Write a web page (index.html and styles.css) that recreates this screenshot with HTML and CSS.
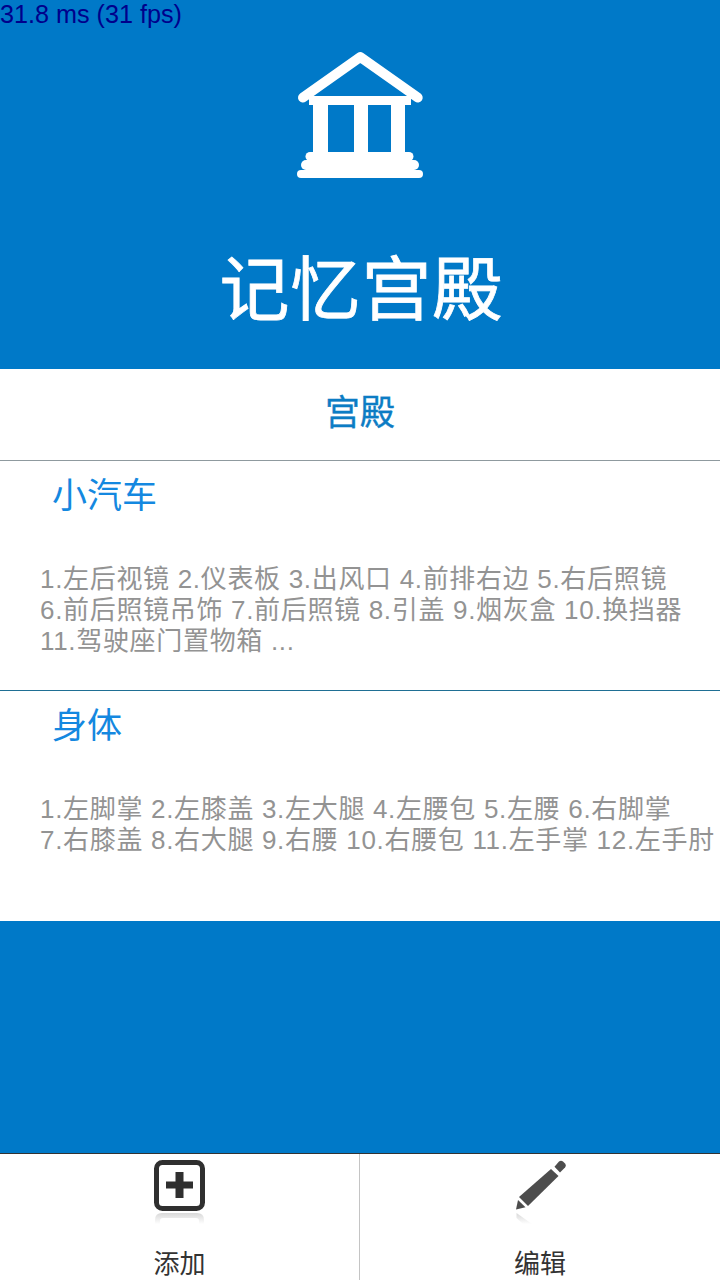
FILE: index.html
```html
<!DOCTYPE html>
<html lang="zh">
<head>
<meta charset="utf-8">
<title>记忆宫殿</title>
<link rel="stylesheet" href="styles.css">
</head>
<body>
<div class="fps">31.8 ms (31 fps)</div>
<header class="hero">
  <svg class="logo" viewBox="0 0 126 128" aria-hidden="true">
    <path class="roof" d="M6 46.500 L63.300 6 L120.700 46.500"/>
    <path class="fill" d="M12 45H114V54H12Z"/>
    <path class="fill" d="M16 50H31V104H16ZM57 50H71V104H57ZM94 50H108V104H94Z"/>
    <path class="fill" d="M13 101H112A4.500 4.500 0 0 1 112 110H13A4.500 4.500 0 0 1 13 101Z"/>
    <path class="fill" d="M9 109H117A5 5 0 0 1 117 119H9A5 5 0 0 1 9 109Z"/>
    <path class="fill" d="M4 119H122A4 4 0 0 1 122 127H4A4 4 0 0 1 4 119Z"/>
  </svg>
  <h1 class="title">记忆宫殿</h1>
</header>
<main class="panel">
  <h2 class="panel-title">宫殿</h2>
  <section class="row row-first">
    <h3 class="row-name">小汽车</h3>
    <p class="row-text">1.左后视镜 2.仪表板 3.出风口 4.前排右边 5.右后照镜<br>6.前后照镜吊饰 7.前后照镜 8.引盖 9.烟灰盒 10.换挡器<br>11.驾驶座门置物箱 ...</p>
  </section>
  <section class="row">
    <h3 class="row-name">身体</h3>
    <p class="row-text">1.左脚掌 2.左膝盖 3.左大腿 4.左腰包 5.左腰 6.右脚掌<br>7.右膝盖 8.右大腿 9.右腰 10.右腰包 11.左手掌 12.左手肘</p>
  </section>
</main>
<div class="spacer"></div>
<nav class="tabs">
  <div class="tab tab-left">
    <svg class="tab-icon" viewBox="0 0 52 66" aria-hidden="true">
      <defs>
        <linearGradient id="fade" x1="0" y1="0" x2="0" y2="1">
          <stop offset="0" stop-color="#d8d8d8"/>
          <stop offset="1" stop-color="#ffffff"/>
        </linearGradient>
      </defs>
      <rect class="box" x="2.500" y="2.500" width="46" height="46" rx="6"/>
      <path class="ink" d="M21.500 12H29.500V21.500H39V28.500H29.500V38H21.500V28.500H12V21.500H21.500Z"/>
      <path d="M1 64V60Q1 53 8 53H43Q50 53 50 60V64H45V61Q45 58 42 58H9Q6 58 6 61V64Z" fill="url(#fade)"/>
    </svg>
    <span class="tab-label">添加</span>
  </div>
  <div class="tab">
    <svg class="tab-icon" viewBox="0 0 52 66" aria-hidden="true">
      <path class="pen" d="M40.500 6.700L45 1.500Q47 0 49 1.500L51 3.500Q52.500 5.500 51 7.500L46 12.500Z"/>
      <path class="pen" d="M37 9L44.500 16L14 46L5 37Z"/>
      <path class="pen" d="M4 40L11.500 47.300L2 49.500Z"/>
      <path d="M2.500 53L18 64H9L2.500 58Z" fill="url(#fade)"/>
    </svg>
    <span class="tab-label">编辑</span>
  </div>
</nav>
</body>
</html>
```
FILE: styles.css
```css
html, body { margin: 0; padding: 0; }
body {
  position: relative;
  width: 720px;
  height: 1280px;
  overflow: hidden;
  display: flex;
  flex-direction: column;
  background: #0079c8;
  font-family: "Liberation Sans", "Noto Sans CJK SC", sans-serif;
}
.fps {
  position: absolute;
  left: 0;
  top: 0;
  font-size: 25.2px;
  line-height: 29px;
  color: #00008b;
}
.hero {
  height: 369px;
  display: flex;
  flex-direction: column;
  align-items: center;
  flex: none;
}
.logo { width: 126px; height: 128px; margin-top: 51px; overflow: visible; }
.roof { fill: none; stroke: #fff; stroke-width: 10; stroke-linecap: round; stroke-linejoin: round; }
.fill { fill: #fff; }
.title {
  margin: 72px 0 0 3px;
  font-size: 70px;
  line-height: 80px;
  font-weight: 400;
  letter-spacing: 1px;
  -webkit-text-stroke: 0.8px #fff;
  color: #fff;
}
.panel { background: #fff; flex: none; height: 552px; }
.panel-title {
  margin: 0;
  height: 91px;
  line-height: 87px;
  text-align: center;
  font-size: 35px;
  font-weight: 400;
  -webkit-text-stroke: 0.4px #0c7cc4;
  color: #0c7cc4;
}
.row {
  height: 229px;
  border-top: 1px solid #1f6f94;
  box-sizing: content-box;
}
.row-first { border-top-color: #8f9a9f; }
.row-name {
  margin: 0;
  padding: 12px 0 0 52px;
  font-size: 35px;
  line-height: 46px;
  font-weight: 400;
  color: #1488e0;
}
.row-text {
  margin: 45px 0 0;
  padding-left: 40px;
  font-size: 26px;
  line-height: 31px;
  letter-spacing: 0.68px;
  color: #939393;
  white-space: nowrap;
}
.spacer { flex: 1; }
.tabs {
  height: 126px;
  flex: none;
  display: flex;
  background: #fff;
  border-top: 1px solid #333;
}
.tab {
  flex: 1;
  display: flex;
  flex-direction: column;
  align-items: center;
  padding-top: 6px;
  box-sizing: border-box;
}
.tab-left { flex: 0 0 359px; }
.tab + .tab { border-left: 1px solid #c4c4c4; }
.tab-icon { width: 52px; height: 66px; flex: none; }
.box { fill: none; stroke: #2f2f2f; stroke-width: 5; }
.ink { fill: #2f2f2f; }
.pen { fill: #4d4d4d; }
.tab-label {
  margin-top: 21px;
  font-size: 26px;
  line-height: 34px;
  color: #333;
}
```
